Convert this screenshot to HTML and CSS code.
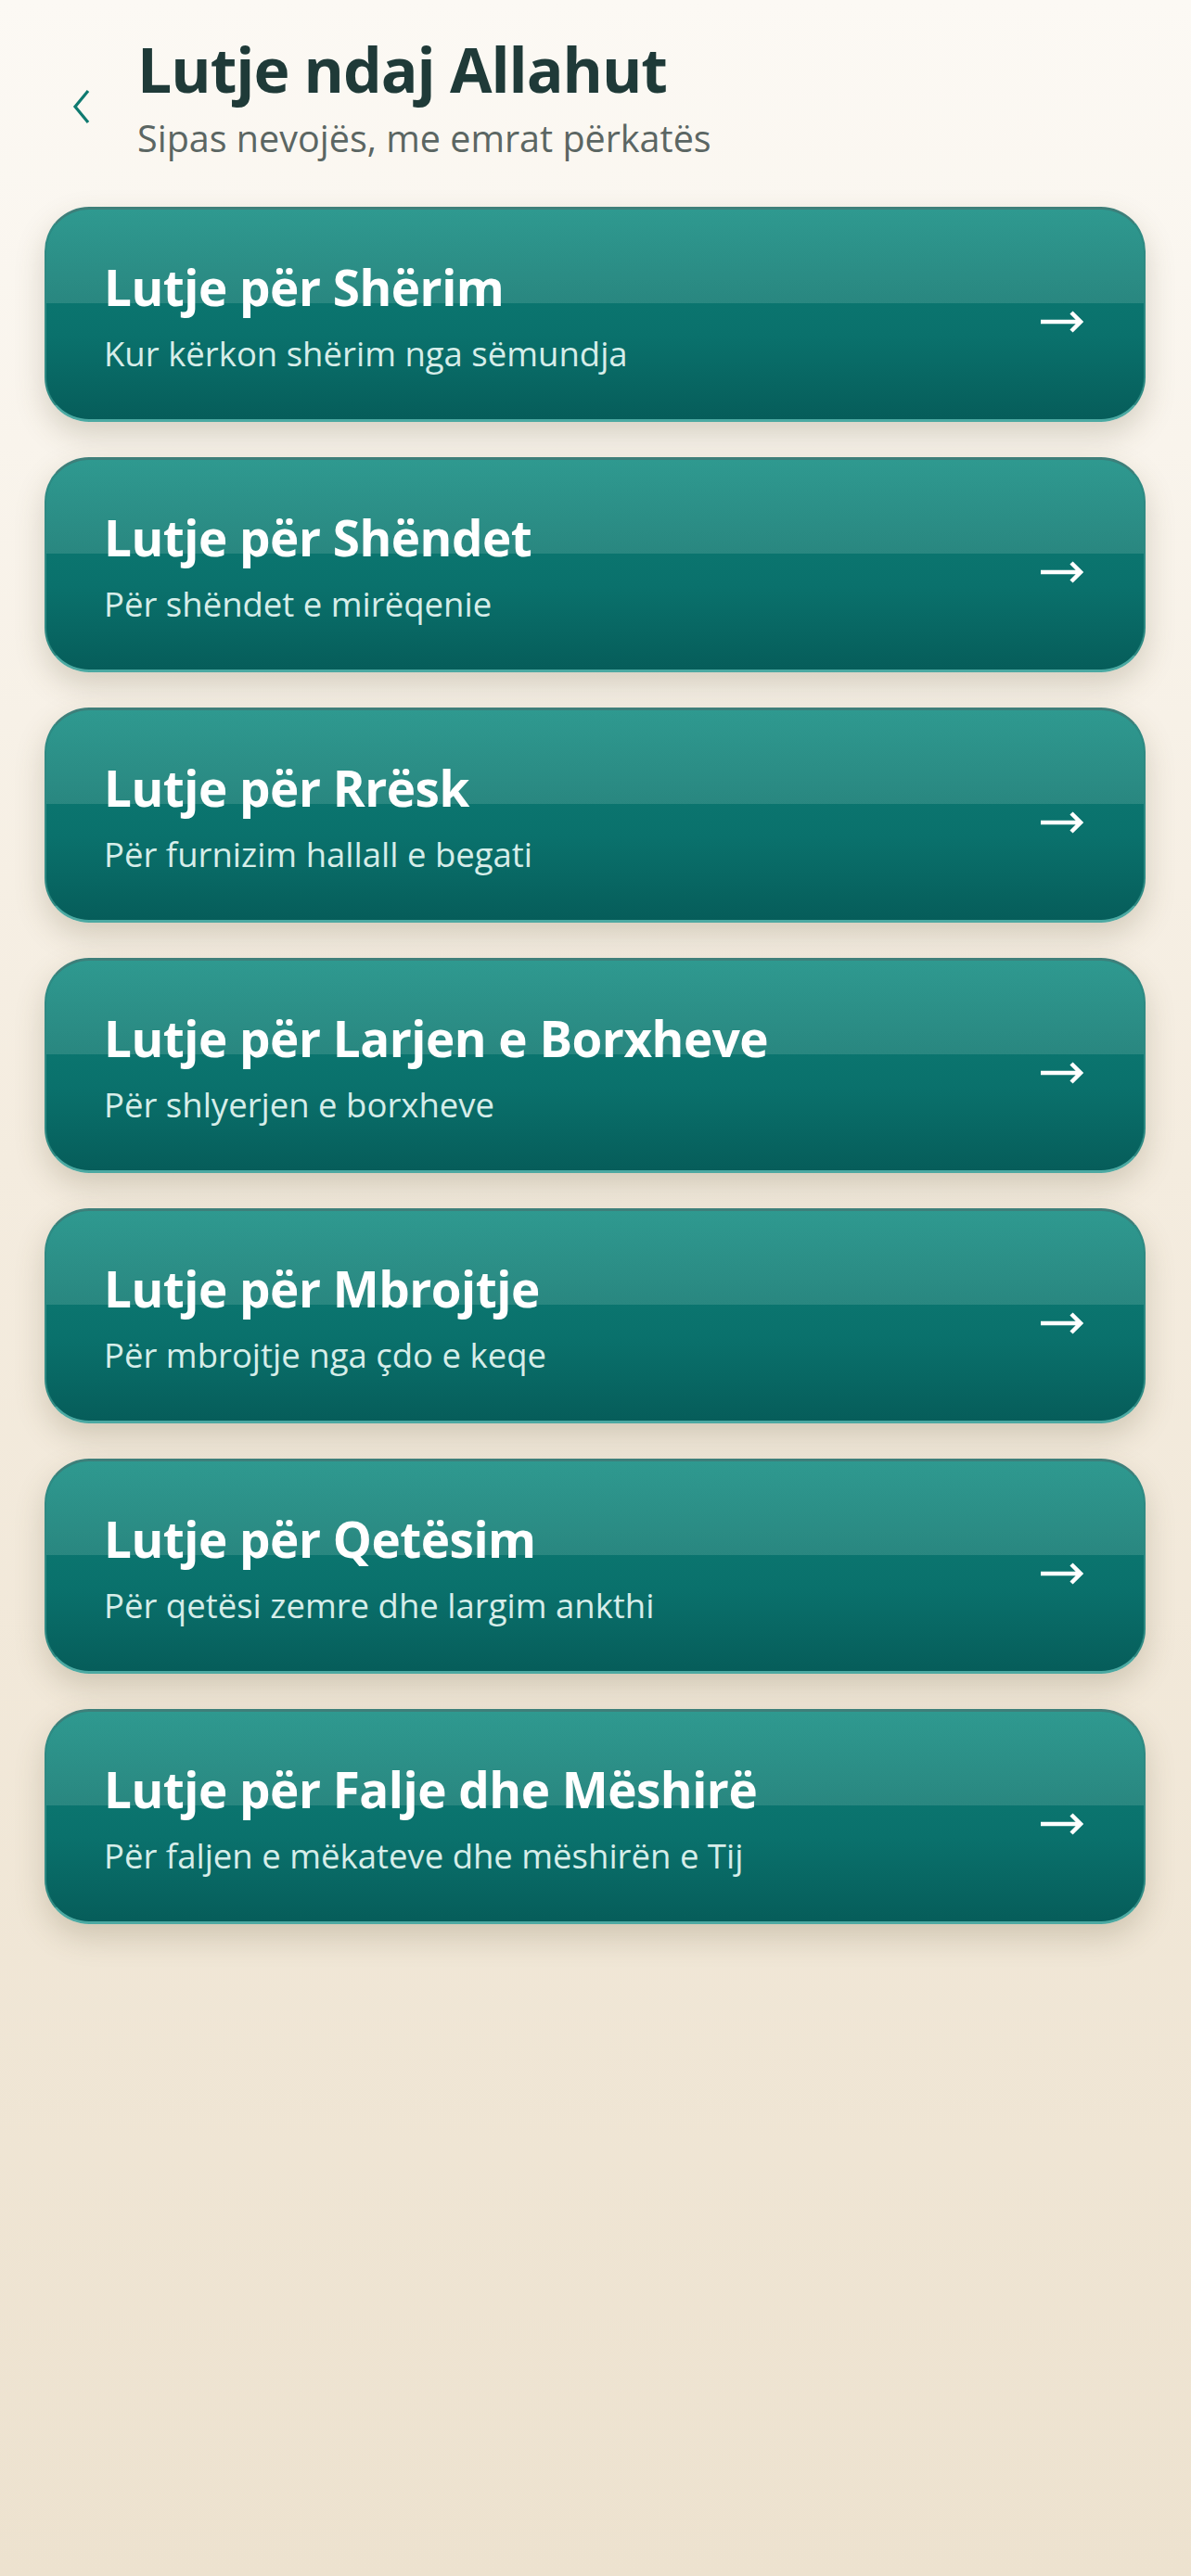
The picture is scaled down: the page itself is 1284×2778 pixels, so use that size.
FILE: index.html
```html
<!DOCTYPE html>
<html>
<head>
  <meta charset="utf-8">
  <title>Lutje ndaj Allahut</title>
  <link rel="stylesheet" href="styles.css">
</head>
<body>
  <div class="page">
    <header class="header">
      <button class="back" aria-label="Kthehu">
        <svg width="24" height="40" viewBox="0 0 24 40">
          <polyline points="19,3 5,20 19,37" fill="none" stroke="#0f7a70" stroke-width="3.2" stroke-linejoin="miter"/>
        </svg>
      </button>
      <div class="heading">
        <h1>Lutje ndaj Allahut</h1>
        <p>Sipas nevojës, me emrat përkatës</p>
      </div>
    </header>

    <div class="list">
      <a class="card" href="#">
        <div class="card-text">
          <h2>Lutje për Shërim</h2>
          <p>Kur kërkon shërim nga sëmundja</p>
        </div>
        <svg class="arrow" width="46" height="26" viewBox="0 0 46 26"><path d="M0 13H42M33 3L43 13L33 23" fill="none" stroke="#fff" stroke-width="4.5"/></svg>
      </a>
      <a class="card" href="#">
        <div class="card-text">
          <h2>Lutje për Shëndet</h2>
          <p>Për shëndet e mirëqenie</p>
        </div>
        <svg class="arrow" width="46" height="26" viewBox="0 0 46 26"><path d="M0 13H42M33 3L43 13L33 23" fill="none" stroke="#fff" stroke-width="4.5"/></svg>
      </a>
      <a class="card" href="#">
        <div class="card-text">
          <h2>Lutje për Rrësk</h2>
          <p>Për furnizim hallall e begati</p>
        </div>
        <svg class="arrow" width="46" height="26" viewBox="0 0 46 26"><path d="M0 13H42M33 3L43 13L33 23" fill="none" stroke="#fff" stroke-width="4.5"/></svg>
      </a>
      <a class="card" href="#">
        <div class="card-text">
          <h2>Lutje për Larjen e Borxheve</h2>
          <p>Për shlyerjen e borxheve</p>
        </div>
        <svg class="arrow" width="46" height="26" viewBox="0 0 46 26"><path d="M0 13H42M33 3L43 13L33 23" fill="none" stroke="#fff" stroke-width="4.5"/></svg>
      </a>
      <a class="card" href="#">
        <div class="card-text">
          <h2>Lutje për Mbrojtje</h2>
          <p>Për mbrojtje nga çdo e keqe</p>
        </div>
        <svg class="arrow" width="46" height="26" viewBox="0 0 46 26"><path d="M0 13H42M33 3L43 13L33 23" fill="none" stroke="#fff" stroke-width="4.5"/></svg>
      </a>
      <a class="card" href="#">
        <div class="card-text">
          <h2>Lutje për Qetësim</h2>
          <p>Për qetësi zemre dhe largim ankthi</p>
        </div>
        <svg class="arrow" width="46" height="26" viewBox="0 0 46 26"><path d="M0 13H42M33 3L43 13L33 23" fill="none" stroke="#fff" stroke-width="4.5"/></svg>
      </a>
      <a class="card" href="#">
        <div class="card-text">
          <h2>Lutje për Falje dhe Mëshirë</h2>
          <p>Për faljen e mëkateve dhe mëshirën e Tij</p>
        </div>
        <svg class="arrow" width="46" height="26" viewBox="0 0 46 26"><path d="M0 13H42M33 3L43 13L33 23" fill="none" stroke="#fff" stroke-width="4.5"/></svg>
      </a>
    </div>
  </div>
</body>
</html>
```

FILE: styles.css
```css
html, body {
  margin: 0;
  padding: 0;
}
body {
  font-family: "Open Sans", "Noto Sans", Arial, sans-serif;
  min-height: 2778px;
  background: linear-gradient(180deg, #fcf9f4 0%, #f4ecdf 45%, #ede2cf 100%);
  color: #1f3a38;
}
.page {
  padding: 29px 49px 60px 48px;
}
.header {
  display: flex;
  align-items: flex-start;
  margin-bottom: 49px;
}
.back {
  background: none;
  border: none;
  padding: 0;
  margin: 66px 48px 0 28px;
  width: 24px;
  height: 40px;
  cursor: pointer;
}
.heading h1 {
  margin: 0;
  font-size: 66px;
  font-weight: 700;
  line-height: 90px;
  letter-spacing: -1px;
  color: #1f3a38;
}
.heading p {
  margin: 5px 0 0;
  font-size: 39.5px;
  line-height: 50px;
  color: #5b6663;
}
.list {
  display: flex;
  flex-direction: column;
  gap: 38px;
}
.card {
  position: relative;
  display: flex;
  align-items: center;
  justify-content: space-between;
  height: 232px;
  box-sizing: border-box;
  padding: 0 65px 0 62px;
  border-radius: 48px;
  border: 2px solid #2f8a83;
  border-top: 3px solid #3e7f7a;
  border-bottom: 3px solid #4ba9a2;
  background: linear-gradient(180deg, #0c7e75 0%, #0a716c 60%, #065d5a 100%);
  box-shadow: 0 14px 32px rgba(90, 80, 50, 0.22);
  text-decoration: none;
  overflow: hidden;
}
.card::before {
  content: "";
  position: absolute;
  left: 0;
  right: 0;
  top: 0;
  height: 101px;
  background: linear-gradient(180deg, rgba(120, 210, 200, 0.32), rgba(150, 200, 190, 0.22));
}
.card-text {
  position: relative;
  padding-top: 4px;
}
.card h2 {
  margin: 0;
  font-size: 53px;
  font-weight: 700;
  line-height: 64px;
  letter-spacing: -0.5px;
  color: #ffffff;
}
.card p {
  margin: 15px 0 0;
  font-size: 36.5px;
  line-height: 48px;
  color: #d6ede9;
}
.arrow {
  position: relative;
  flex-shrink: 0;
  margin-top: 16px;
}
```
